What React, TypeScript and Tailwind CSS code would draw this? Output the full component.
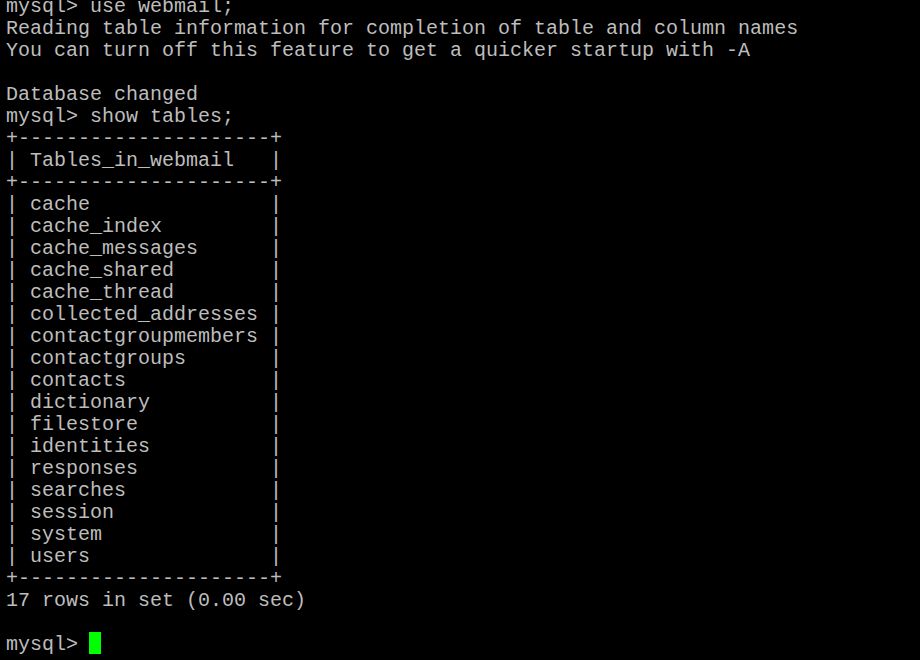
const TABLES = [
  "cache",
  "cache_index",
  "cache_messages",
  "cache_shared",
  "cache_thread",
  "collected_addresses",
  "contactgroupmembers",
  "contactgroups",
  "contacts",
  "dictionary",
  "filestore",
  "identities",
  "responses",
  "searches",
  "session",
  "system",
  "users",
];

const BORDER = "+---------------------+";

const LINES: string[] = [
  "mysql> use webmail;",
  "Reading table information for completion of table and column names",
  "You can turn off this feature to get a quicker startup with -A",
  "",
  "Database changed",
  "mysql> show tables;",
  BORDER,
  "| Tables_in_webmail   |",
  BORDER,
  ...TABLES.map((t) => "| " + t.padEnd(20, " ") + "|"),
  BORDER,
  "17 rows in set (0.00 sec)",
  "",
];

export default function App() {
  return (
    <div className="h-[660px] w-[920px] overflow-hidden bg-black">
      <div className="-mt-[4px] pl-[6px] font-['Liberation_Mono','Courier_New',monospace] text-[20px] leading-[22px] text-[#bdbdbd]">
        {LINES.map((l, i) => (
          <div key={i} className="h-[22px] whitespace-pre">
            {l}
          </div>
        ))}
        <div className="flex h-[22px] items-center whitespace-pre">
          <span>mysql&gt; </span>
          <span className="-ml-[1px] mb-[4px] h-[22px] w-[12px] bg-[#00ff00]" />
        </div>
      </div>
    </div>
  );
}
